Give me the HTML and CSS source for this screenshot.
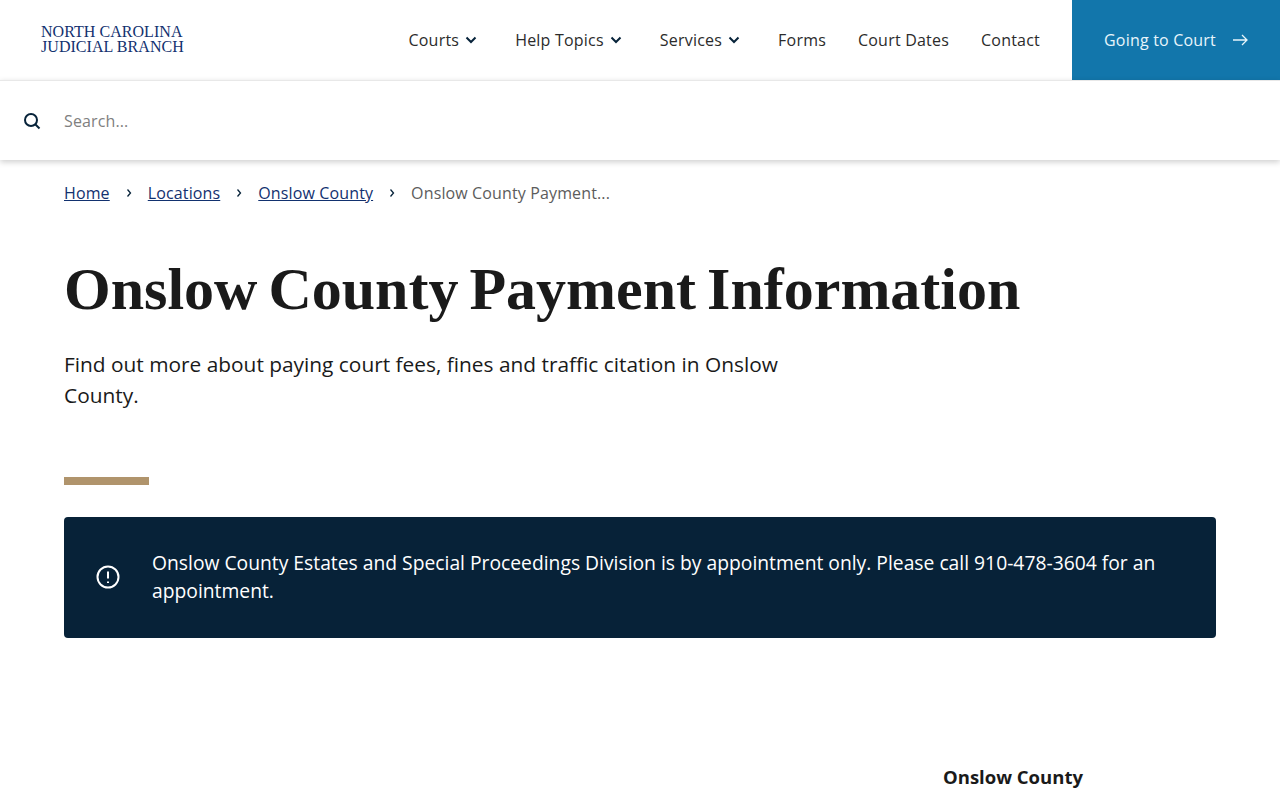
FILE: index.html
```html
<!DOCTYPE html>
<html lang="en">
<head>
<meta charset="utf-8">
<title>Onslow County Payment Information</title>
<link rel="stylesheet" href="styles.css">
</head>
<body>
<header class="topbar">
  <a class="logo" href="#"><span>NORTH CAROLINA</span><span>JUDICIAL BRANCH</span></a>
  <nav class="nav">
    <a class="nav-item" href="#">Courts<svg class="chev" viewBox="0 0 16 8" width="16" height="8"><path d="M3.500 1.500 8 6l4.500-4.500" /></svg></a>
    <a class="nav-item" href="#">Help Topics<svg class="chev" viewBox="0 0 16 8" width="16" height="8"><path d="M3.500 1.500 8 6l4.500-4.500" /></svg></a>
    <a class="nav-item" href="#">Services<svg class="chev" viewBox="0 0 16 8" width="16" height="8"><path d="M3.500 1.500 8 6l4.500-4.500" /></svg></a>
    <a class="nav-item" href="#">Forms</a>
    <a class="nav-item" href="#">Court Dates</a>
    <a class="nav-item" href="#">Contact</a>
  </nav>
  <a class="cta" href="#">Going to Court<svg class="arrow" viewBox="0 0 16 12" width="16" height="12"><path d="M1 6h14M10 1l5 5-5 5" /></svg></a>
</header>
<div class="searchbar">
  <svg class="search-icon" viewBox="0 0 18 18" width="18" height="18"><circle cx="8" cy="8" r="6" /><path d="M12.500 12.500 16.500 16.500" /></svg>
  <span class="search-text">Search...</span>
</div>
<main class="page">
  <ol class="crumbs">
    <li><a href="#">Home</a></li>
    <li class="sep"><svg viewBox="0 0 6 10" width="6" height="10"><path d="M1.500 1.500 4.500 5l-3 3.500" /></svg></li>
    <li><a href="#">Locations</a></li>
    <li class="sep"><svg viewBox="0 0 6 10" width="6" height="10"><path d="M1.500 1.500 4.500 5l-3 3.500" /></svg></li>
    <li><a href="#">Onslow County</a></li>
    <li class="sep"><svg viewBox="0 0 6 10" width="6" height="10"><path d="M1.500 1.500 4.500 5l-3 3.500" /></svg></li>
    <li class="current">Onslow County Payment...</li>
  </ol>
  <h1 class="title">Onslow County Payment Information</h1>
  <p class="lead">Find out more about paying court fees, fines and traffic citation in Onslow County.</p>
  <div class="rule"></div>
  <div class="alert">
    <svg class="alert-icon" viewBox="0 0 24 24" width="24" height="24"><circle cx="12" cy="12" r="10.500" /><path d="M12 6.500v7M12 16.500v1.500" /></svg>
    <p>Onslow County Estates and Special Proceedings Division is by appointment only. Please call 910-478-3604 for an appointment.</p>
  </div>
  <div class="aside"><h2>Onslow County</h2></div>
</main>
</body>
</html>
```
FILE: styles.css
```css
* { box-sizing: border-box; }
html, body { margin: 0; padding: 0; }
body { font-family: "Open Sans", sans-serif; color: #1a1a1a; background: #fff; height: 800px; overflow: hidden; }
a { color: inherit; text-decoration: none; }

.topbar { display: flex; align-items: center; height: 80px; background: #fff; }
.logo { display: flex; flex-direction: column; margin: 0 0 2px 41px; font-family: "Liberation Serif", serif; font-size: 16px; line-height: 15px; letter-spacing: .05px; color: #12316f; }
.nav { display: flex; align-items: center; margin-left: auto; gap: 32px; margin-right: 32px; font-size: 16px; letter-spacing: .21px; color: #2b2b2b; }
.nav-item { display: flex; align-items: center; }
.chev { margin: 0 4px; fill: none; stroke: #07233a; stroke-width: 2; }
.cta { display: flex; align-items: center; gap: 16px; width: 208px; height: 80px; padding-left: 32px; background: #1276ab; color: #e8f5fb; font-size: 16px; letter-spacing: .2px; }
.arrow { fill: none; stroke: #e8f5fb; stroke-width: 1.300; }

.searchbar { display: flex; align-items: center; height: 80px; padding-left: 23px; gap: 23px; background: #fff; border-top: 1px solid #e8e8e8; box-shadow: 0 2px 6px rgba(0, 0, 0, .2); position: relative; }
.search-icon { fill: none; stroke: #07233a; stroke-width: 2; }
.search-text { color: #808080; font-size: 16px; letter-spacing: .12px; }

.page { padding: 0 64px; }
.crumbs { display: flex; align-items: center; gap: 16px; list-style: none; margin: 0; padding: 22px 0 0; font-size: 16px; line-height: 22px; letter-spacing: .13px; }
.crumbs a { color: #12316f; text-decoration: underline; }
.sep { display: flex; }
.sep svg { fill: none; stroke: #07233a; stroke-width: 1.300; }
.current { color: #5c5c5c; }

.title { margin: 49px 0 0; font-family: "Liberation Serif", serif; font-weight: 700; font-size: 60px; line-height: 72px; color: #1a1a1a; word-spacing: -4px; }
.lead { width: 760px; margin: 24px 0 0; font-size: 20.860px; line-height: 31px; }
.rule { width: 85px; height: 8px; margin-top: 66px; background: #b0946c; }
.alert { display: flex; align-items: center; gap: 32px; margin-top: 32px; height: 121px; padding: 0 32px 2px; background: #072238; border-radius: 4px; color: #fff; }
.alert p { margin: 0; font-size: 19.300px; line-height: 28px; }
.alert-icon { flex: none; fill: none; stroke: #fff; stroke-width: 2; }
.aside { margin-top: 125px; margin-left: 879px; }
.aside h2 { margin: 0; font-size: 18.500px; line-height: 28px; font-weight: 700; }
```
